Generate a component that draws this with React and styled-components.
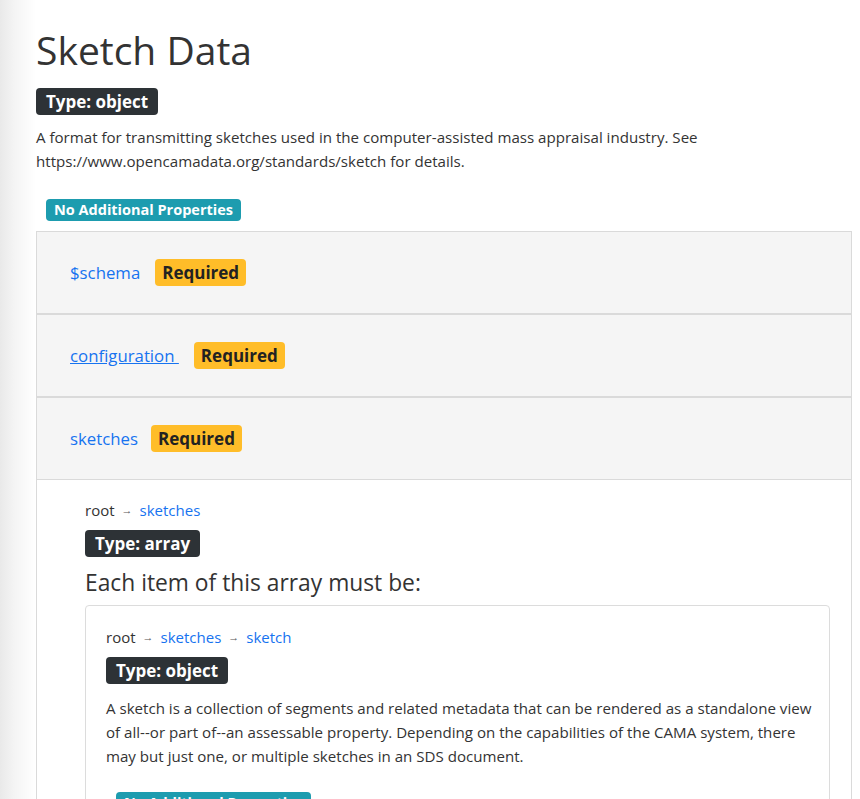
import React from 'react';
import styled, { createGlobalStyle } from 'styled-components';

const GlobalStyle = createGlobalStyle`
  body {
    margin: 0;
    font-family: 'Open Sans', 'Liberation Sans', sans-serif;
    color: #333;
    background: #fff;
  }
`;

const Page = styled.div`
  min-height: 799px;
  padding: 26px 8px 0 36px;
  background: linear-gradient(to right, #e9e9e9 0, #f4f4f4 14px, #fff 36px);
  overflow: hidden;
`;

const Title = styled.h1`
  font-size: 39px;
  font-weight: 400;
  line-height: 48px;
  margin: 0 0 14px;
  color: #333;
`;

const Badge = styled.span`
  display: inline-block;
  font-weight: 700;
  border-radius: 4px;
  white-space: nowrap;
  font-size: ${({ $small }) => ($small ? '14.5px' : '17px')};
  line-height: ${({ $small }) => ($small ? '22px' : '27px')};
  padding: ${({ $small, $tone }) =>
    $small ? '0 8px' : $tone === 'warning' ? '0 7px' : '0 10px'};
  color: ${({ $tone }) => ($tone === 'warning' ? '#222' : '#fff')};
  background: ${({ $tone }) =>
    $tone === 'warning' ? '#ffbd29' : $tone === 'info' ? '#1d9caf' : '#2d3236'};
`;

const Description = styled.p`
  font-size: 15.1px;
  line-height: ${({ $lh }) => $lh || '23.5px'};
  margin: ${({ $top }) => $top || '11px'} 0 0;
  max-width: ${({ $max }) => $max || 'none'};
`;

const ExtraRow = styled.div`
  margin: ${({ $top }) => $top || '25px'} 0 0 10px;
  height: 33px;
`;

const Accordion = styled.div`
  display: flex;
  flex-direction: column;
`;

const Row = styled.div`
  box-sizing: border-box;
  display: flex;
  align-items: center;
  gap: ${({ $gap }) => $gap || '15px'};
  height: 83px;
  padding: 0 0 0 33px;
  background: #f5f5f5;
  border: 1px solid #dadada;
`;

const Link = styled.a`
  color: #1673f0;
  font-size: 16.8px;
  text-decoration: ${({ $underline }) => ($underline ? 'underline' : 'none')};
  cursor: pointer;
`;

const Body = styled.div`
  background: #fff;
  border-left: 1px solid #dadada;
  border-right: 1px solid #dadada;
  padding: 19px 21px 0 48px;
`;

const Crumbs = styled.div`
  font-size: 15px;
  line-height: 22px;
  display: flex;
  align-items: center;
  gap: 7px;
  margin-bottom: 9px;
  a {
    color: #1673f0;
    text-decoration: none;
  }
`;

const Arrow = styled.span`
  font-size: 11px;
  font-weight: 700;
  color: #555;
`;

const ArrayHeading = styled.h3`
  font-size: 22.8px;
  font-weight: 400;
  line-height: 28px;
  margin: 12px 0 8px;
`;

const Card = styled.div`
  border: 1px solid #dcdcdc;
  border-radius: 4px;
  padding: 20px 12px 40px 20px;
`;

const Breadcrumb = ({ items }) => (
  <Crumbs>
    <span>root</span>
    {items.map((item) => (
      <React.Fragment key={item}>
        <Arrow>→</Arrow>
        <a>{item}</a>
      </React.Fragment>
    ))}
  </Crumbs>
);

export default function App() {
  return (
    <>
      <GlobalStyle />
      <Page>
        <Title>Sketch Data</Title>
        <Badge>Type: object</Badge>
        <Description $max="690px">
          A format for transmitting sketches used in the computer-assisted mass
          appraisal industry. See https://www.opencamadata.org/standards/sketch
          for details.
        </Description>
        <ExtraRow>
          <Badge $small $tone="info">No Additional Properties</Badge>
        </ExtraRow>
        <Accordion>
          <Row>
            <Link>$schema</Link>
            <Badge $tone="warning">Required</Badge>
          </Row>
          <Row>
            <Link $underline>configuration&nbsp;</Link>
            <Badge $tone="warning">Required</Badge>
          </Row>
          <Row $gap="13px">
            <Link>sketches</Link>
            <Badge $tone="warning">Required</Badge>
          </Row>
          <Body>
            <Breadcrumb items={['sketches']} />
            <Badge>Type: array</Badge>
            <ArrayHeading>Each item of this array must be:</ArrayHeading>
            <Card>
              <Breadcrumb items={['sketches', 'sketch']} />
              <Badge>Type: object</Badge>
              <Description $top="12px" $lh="24px">
                A sketch is a collection of segments and related metadata that
                can be rendered as a standalone view of all--or part of--an
                assessable property. Depending on the capabilities of the CAMA
                system, there may but just one, or multiple sketches in an SDS
                document.
              </Description>
              <ExtraRow $top="23px">
                <Badge $small $tone="info">No Additional Properties</Badge>
              </ExtraRow>
            </Card>
          </Body>
        </Accordion>
      </Page>
    </>
  );
}
